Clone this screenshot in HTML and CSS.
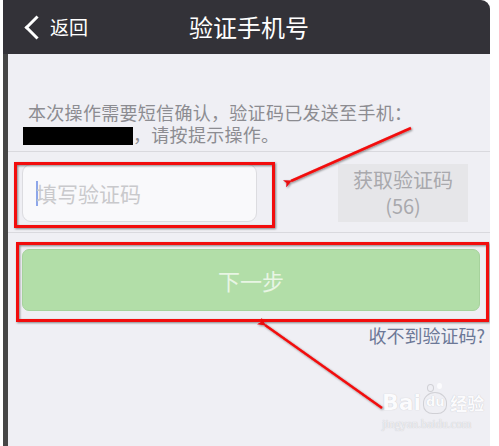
FILE: index.html
```html
<!DOCTYPE html>
<html>
<head>
  <meta charset="utf-8">
  <title>验证手机号</title>
  <link rel="stylesheet" href="styles.css">
</head>
<body>
  <div class="phone">
    <div class="navbar">
      <a class="navbar_back"><span class="navbar_chevron"></span>返回</a>
      <div class="navbar_title">验证手机号</div>
    </div>

    <div class="screen">
      <p class="verify_tip">本次操作需要短信确认，验证码已发送至手机：<br><span class="verify_mask"></span>，请按提示操作。</p>

      <div class="verify_row">
        <div class="verify_input"><span class="verify_caret"></span>填写验证码</div>
        <div class="verify_send">获取验证码<br>(56)</div>
      </div>

      <div class="verify_next">
        <div class="verify_button">下一步</div>
        <div class="verify_help">收不到验证码?</div>
      </div>

      <div class="watermark">
        <div class="watermark_logo">Bai<span class="watermark_du">du</span><span class="watermark_cn">经验</span></div>
        <div class="watermark_url">jingyan.baidu.com</div>
      </div>
    </div>

    <!-- пометки поверх скриншота -->
    <svg class="marks" width="487" height="446" viewBox="0 0 487 446">
      <defs>
        <filter id="shade" x="-10%" y="-10%" width="120%" height="120%">
          <feDropShadow dx="1" dy="1" stdDeviation="1" flood-color="#000" flood-opacity="0.45"/>
        </filter>
        <marker id="head" markerWidth="8" markerHeight="8" refX="1" refY="4" orient="auto-start-reverse" markerUnits="userSpaceOnUse">
          <path d="M0 4 L8 0 L6 4 L8 8 Z" fill="#e8080c"/>
        </marker>
      </defs>
      <g filter="url(#shade)" fill="none" stroke="#f20a0a" stroke-width="3">
        <rect x="12.5" y="163.5" width="258" height="63"/>
        <rect x="14.5" y="243.5" width="470" height="77"/>
        <line x1="408" y1="128" x2="288" y2="181" stroke-width="2.5" marker-end="url(#head)"/>
        <line x1="379" y1="408" x2="262" y2="325" stroke-width="2.5" marker-end="url(#head)"/>
      </g>
    </svg>
  </div>
</body>
</html>
```

FILE: styles.css
```css
body {
    margin: 0;
    background: #fff;
    font-family: "Noto Sans CJK SC", "Noto Sans", sans-serif;
}

.phone {
    position: relative;
    margin-left: 3px;
    width: 487px;
    height: 446px;
    display: flex;
    flex-direction: column;
}

/* Шапка */
.navbar {
    height: 54px;
    flex: none;
    background: #333238;
    border-top-right-radius: 9px;
    display: flex;
    align-items: center;
    justify-content: center;
    position: relative;
    color: #fff;
}

.navbar_back {
    position: absolute;
    left: 19px;
    top: 14px;
    display: flex;
    align-items: center;
    font-size: 19px;
    line-height: 26px;
}

.navbar_chevron {
    width: 14px;
    height: 14px;
    border-left: 3px solid #fff;
    border-bottom: 3px solid #fff;
    transform: rotate(45deg);
    margin: 0 5px 0 6px;
}

.navbar_title {
    font-size: 24px;
    margin-left: 5px;
    margin-top: -2px;
}

/* Экран */
.screen {
    flex: 1;
    position: relative;
    background: #efeff4;
    border-left: 5px solid #464646;
}

.verify_tip {
    margin: 47px 0 0;
    padding: 0 0 6px 20px;
    font-size: 18px;
    line-height: 22px;
    letter-spacing: 0.3px;
    color: #8c8c91;
    border-bottom: 1px solid #d9d9de;
}

.verify_mask {
    display: inline-block;
    width: 110px;
    height: 18px;
    margin-left: -5px;
    vertical-align: -3px;
    background: #000;
}

.verify_row {
    display: flex;
    align-items: center;
    justify-content: space-between;
    padding: 12px 22px 10px 14px;
    border-bottom: 1px solid #d9d9de;
}

.verify_input {
    width: 220px;
    height: 56px;
    padding-left: 13px;
    display: flex;
    align-items: center;
    background: #f9f9fb;
    border: 1px solid #dcdce0;
    border-radius: 9px;
    font-size: 21px;
    color: #c9c9cc;
}

.verify_caret {
    width: 2px;
    height: 25px;
    margin-right: -2px;
    background: #8ea6ea;
}

.verify_send {
    width: 130px;
    height: 58px;
    background: #e6e6e9;
    color: #a9a9ad;
    font-size: 20px;
    line-height: 26px;
    text-align: center;
    display: flex;
    align-items: center;
    justify-content: center;
}

.verify_next {
    padding: 16px 5px 0 14px;
}

.verify_button {
    height: 60px;
    margin-right: 5px;
    background: #b2dea8;
    border: 1px solid #a6d29c;
    border-radius: 7px;
    color: #e8f5e4;
    font-size: 22px;
    display: flex;
    align-items: center;
    justify-content: center;
}

.verify_help {
    margin-top: 11px;
    text-align: right;
    font-size: 18px;
    color: #6c7897;
}

/* Водяной знак */
.watermark {
    position: absolute;
    left: 374px;
    top: 336px;
    color: #fbfbfd;
    text-shadow: 0 0 1px #bdbdc2;
}

.watermark_logo {
    font-family: "DejaVu Sans", sans-serif;
    font-weight: bold;
    font-size: 22px;
    line-height: 26px;
    display: flex;
    align-items: center;
}

.watermark_du {
    position: relative;
    font-size: 13px;
    width: 22px;
    height: 20px;
    margin-left: 2px;
    border-radius: 50% 50% 40% 40%;
    border: 1px solid #d0d0d5;
    text-align: center;
    line-height: 18px;
}

.watermark_du::before {
    content: "";
    position: absolute;
    left: 3px;
    top: -9px;
    width: 5px;
    height: 6px;
    border-radius: 50%;
    border: 1px solid #d0d0d5;
    box-shadow: 9px -2px 0 -1px #fbfbfd;
}

.watermark_cn {
    font-family: "Noto Sans CJK SC", sans-serif;
    font-size: 17px;
    margin-left: 3px;
}

.watermark_url {
    font-family: "Liberation Serif", serif;
    font-size: 12px;
    line-height: 14px;
    margin-top: 1px;
    color: #f0f0f3;
    text-shadow: 0 0 1px #b8b8be;
}

.marks {
    position: absolute;
    left: 0;
    top: 0;
    pointer-events: none;
}
```
